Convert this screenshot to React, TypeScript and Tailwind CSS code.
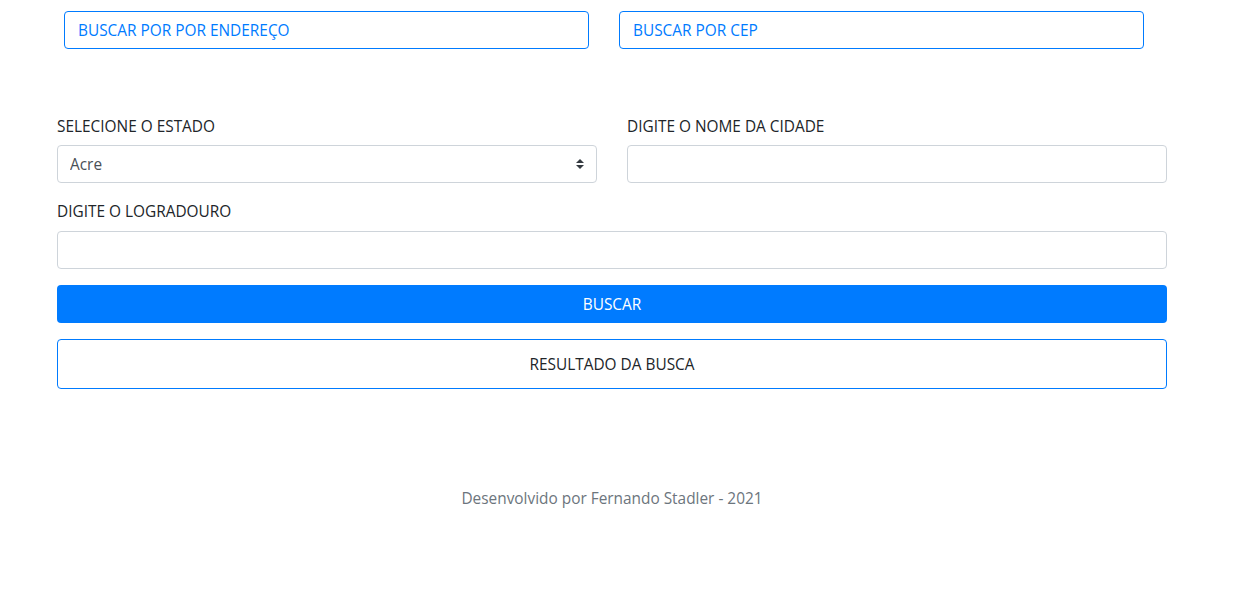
import { useState } from "react";

const estados = ["Acre", "Alagoas", "Amapá", "Amazonas", "Bahia", "Ceará"];

function App() {
  const [estado, setEstado] = useState<string>("Acre");
  const [cidade, setCidade] = useState<string>("");
  const [logradouro, setLogradouro] = useState<string>("");

  return (
    <div
      className="min-h-[599px] bg-white text-[#212529] text-[16px] leading-6"
      style={{ fontFamily: '"Open Sans", "Noto Sans", sans-serif' }}
    >
      <div className="ml-[57px] w-[1110px]">
        <div className="grid grid-cols-2 pt-[11px]">
          <div className="pl-[7px]">
            <button className="w-[525px] h-[38px] border border-[#007bff] rounded-[4px] px-[13px] pt-[2px] text-left text-[#007bff] text-[15.4px]">
              BUSCAR POR POR ENDEREÇO
            </button>
          </div>
          <div className="pl-[7px]">
            <button className="w-[525px] h-[38px] border border-[#007bff] rounded-[4px] px-[13px] pt-[2px] text-left text-[#007bff] text-[15.4px]">
              BUSCAR POR CEP
            </button>
          </div>
        </div>

        <div className="grid grid-cols-2 gap-x-[30px] mt-[65px]">
          <div>
            <label className="block text-[15.4px] pt-[1px] mb-[6px]">SELECIONE O ESTADO</label>
            <div className="relative">
              <select
                className="w-full h-[38px] appearance-none border border-[#ced4da] rounded-[4px] pl-[12px] pt-[2px] text-[15.4px] text-[#495057] bg-white"
                value={estado}
                onChange={(e: React.ChangeEvent<HTMLSelectElement>) => {
                  setEstado(e.target.value);
                }}
              >
                {estados.map((uf) => (
                  <option key={uf}>{uf}</option>
                ))}
              </select>
              <svg
                className="absolute right-[13px] top-[14px] pointer-events-none"
                width="8"
                height="10"
                viewBox="0 0 8 10"
              >
                <path d="M4 0 L8 4 H0 Z M0 6 H8 L4 10 Z" fill="#343a40" />
              </svg>
            </div>
          </div>
          <div>
            <label className="block text-[15.4px] pt-[1px] mb-[6px]">DIGITE O NOME DA CIDADE</label>
            <input
              className="w-full h-[38px] border border-[#ced4da] rounded-[4px] px-[12px] outline-none"
              value={cidade}
              onChange={(e: React.ChangeEvent<HTMLInputElement>) => {
                setCidade(e.target.value);
              }}
            />
          </div>
        </div>

        <div className="mt-[16px]">
          <label className="block text-[15.4px] pt-[1px] mb-[7px]">DIGITE O LOGRADOURO</label>
          <input
            className="w-full h-[38px] border border-[#ced4da] rounded-[4px] px-[12px] outline-none"
            value={logradouro}
            onChange={(e: React.ChangeEvent<HTMLInputElement>) => {
              setLogradouro(e.target.value);
            }}
          />
        </div>

        <button className="mt-[16px] w-full h-[38px] bg-[#007bff] text-white rounded-[4px] pt-[2px] text-[15.4px]">
          BUSCAR
        </button>

        <div className="mt-[16px] h-[50px] border border-[#007bff] rounded-[4px] pt-[2px] flex items-center justify-center text-[15.4px]">
          RESULTADO DA BUSCA
        </div>

        <p className="mt-[98px] text-center text-[#6c757d] text-[15.4px]">
          Desenvolvido por Fernando Stadler - 2021
        </p>
      </div>
    </div>
  );
}

export default App;
